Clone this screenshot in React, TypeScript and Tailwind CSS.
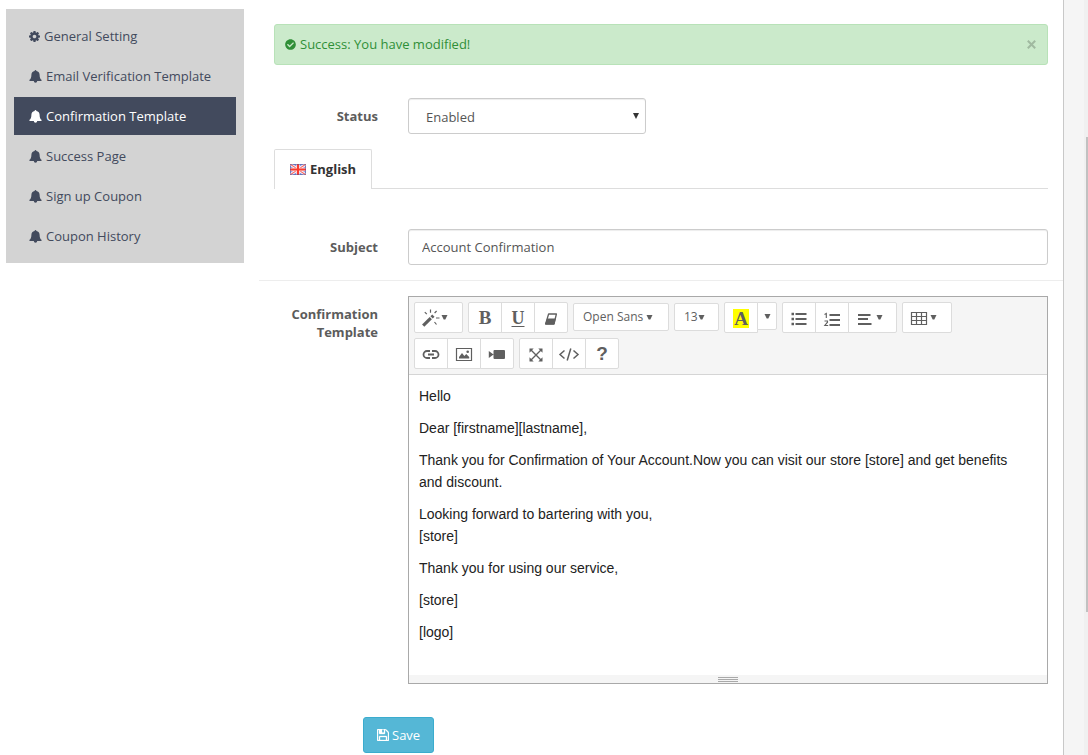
import { useState } from "react";
import type { ReactNode } from "react";
import { FaCheckCircle } from "react-icons/fa";

const menu = [
  "General Setting",
  "Email Verification Template",
  "Confirmation Template",
  "Success Page",
  "Sign up Coupon",
  "Coupon History",
];

function Caret() {
  return (
    <svg className="h-[5px] w-[7px] shrink-0" viewBox="0 0 7 5" fill="currentColor" aria-hidden="true">
      <path d="M0.5 0H6.5L4.3 4.6H2.7Z" />
    </svg>
  );
}

function Cog() {
  return (
    <svg className="h-[11px] w-[11px] shrink-0" viewBox="0 128 1536 1536" fill="currentColor" aria-hidden="true">
      <path d="M1024 896q0-106-75-181t-181-75-181 75-75 181 75 181 181 75 181-75 75-181zm512-109v222q0 12-8 23t-20 13l-185 28q-19 54-39 91 35 50 107 138 10 12 10 25t-9 23q-27 37-99 108t-94 71q-12 0-26-9l-138-108q-44 23-91 38-16 136-29 186-7 28-36 28h-222q-14 0-24.5-8.500t-11.500-21.500l-28-184q-49-16-90-37l-141 107q-10 9-25 9-14 0-25-11-126-114-165-168-7-10-7-23 0-12 8-23 15-21 51-66.500t54-70.500q-27-50-41-99l-183-27q-13-2-21-12.500t-8-23.500v-222q0-12 8-23t19-13l186-28q14-46 39-92-40-57-107-138-10-12-10-24 0-10 9-23 26-36 98.500-107.500t94.500-71.500q13 0 26 10l138 107q44-23 91-38 16-136 29-186 7-28 36-28h222q14 0 24.500 8.500t11.500 21.500l28 184q49 16 90 37l142-107q9-9 24-9 13 0 25 10 129 119 165 170 7 8 7 22 0 12-8 23-15 21-51 66.500t-54 70.500q26 50 41 98l183 28q13 2 21 12.500t8 23.500z" />
    </svg>
  );
}

function Bell() {
  return (
    <svg className="h-[13px] w-[13px] shrink-0" viewBox="0 0 13 13" fill="currentColor" aria-hidden="true">
      <path d="M6.500 0a.9.9 0 0 1 .9.900c2.100.4 3.200 1.900 3.200 3.800 0 2.700.6 4.200 2.100 5.400 0 .6-.4 1-1 1H1.300c-.6 0-1-.4-1-1 1.500-1.200 2.100-2.700 2.100-5.400 0-1.900 1.100-3.400 3.200-3.800A.9.9 0 0 1 6.500 0zM4.800 11.100h3.400a1.700 1.700 0 0 1-3.400 0z" />
    </svg>
  );
}

function Glyph({ children, wide = false }: { children: ReactNode; wide?: boolean }) {
  return (
    <svg
      className={wide ? "h-[18px] w-[22px] shrink-0" : "h-[18px] w-[18px] shrink-0"}
      viewBox={wide ? "0 0 22 18" : "0 0 18 18"}
      fill="none"
      stroke="currentColor"
      aria-hidden="true"
    >
      {children}
    </svg>
  );
}

function Tool({ label, className = "h-[31px] w-[34px] justify-center", children }: { label: string; className?: string; children: ReactNode }) {
  return (
    <button
      type="button"
      aria-label={label}
      title={label}
      className={`-ml-px flex items-center border border-[#dcdcdc] bg-white whitespace-nowrap text-[#5f5f5f] first:ml-0 first:rounded-l-xs last:rounded-r-xs ${className}`}
    >
      {children}
    </button>
  );
}

function Group({ children }: { children: ReactNode }) {
  return <div className="flex h-[31px] items-start">{children}</div>;
}

function Toolbar() {
  return (
    <div className="flex flex-wrap gap-[5px] border-b border-[#d5d5d5] bg-[#f5f5f5] p-[5px]">
      <Group>
        <Tool label="Style" className="h-[31px] w-[49px] gap-px pl-[7px]">
          <Glyph>
            <path d="M1.2 16.6L8.8 9.2" strokeWidth="3.2" />
            <path d="M9.600 8.4L11.4 6.600" strokeWidth="3.2" />
            <path d="M2.800 3.200l2 2M8.500 0.500v3.200M14.600 2l-2 2M14 9h3.500M12.500 13l2 2.500" strokeWidth="1.200" />
          </Glyph>
          <Caret />
        </Tool>
      </Group>
      <Group>
        <Tool label="Bold">
          <span className="pt-px font-['Liberation_Serif',serif] text-[19px] leading-5 font-bold">B</span>
        </Tool>
        <Tool label="Underline">
          <span className="pt-px font-['Liberation_Serif',serif] text-[18px] leading-5 font-bold underline decoration-1 underline-offset-2">U</span>
        </Tool>
        <Tool label="Remove font style">
          <Glyph>
            <path d="M6.6 5H14.400L12 15H3.600Z" strokeWidth="1.300" strokeLinejoin="round" />
            <path d="M5.400 10H13.200L12 15H3.600Z" fill="currentColor" />
          </Glyph>
        </Tool>
      </Group>
      <Group>
        <Tool label="Font family" className="mt-px h-[28px] w-[96px] gap-[3px] pl-[9px]">
          <span className="text-[12px] leading-5">Open Sans</span>
          <Caret />
        </Tool>
      </Group>
      <Group>
        <Tool label="Font size" className="mt-px h-[28px] w-[45px] pl-[9px]">
          <span className="text-[12px] leading-5">13</span>
          <Caret />
        </Tool>
      </Group>
      <Group>
        <Tool label="Recent color">
          <span className="mt-px bg-[#ffff00] px-px font-['Liberation_Serif',serif] text-[19px] leading-[19px] font-bold">A</span>
        </Tool>
        <Tool label="More colors" className="h-[28px] w-[20px] justify-center">
          <Caret />
        </Tool>
      </Group>
      <Group>
        <Tool label="Unordered list">
          <Glyph>
            <path d="M1.500 5h2.500M1.500 10h2.500M1.500 15h2.500" strokeWidth="2.400" />
            <path d="M5.500 5h11M5.500 10h11M5.500 15h11" strokeWidth="2" />
          </Glyph>
        </Tool>
        <Tool label="Ordered list">
          <Glyph>
            <path d="M6.500 6h10.500M6.500 11h10.500M6.500 16h10.500" strokeWidth="2" />
            <path d="M1.500 5.400L3.300 4.500V9M1.500 12h3v1.200L1.800 16.500h3.400" strokeWidth="1.100" />
          </Glyph>
        </Tool>
        <Tool label="Paragraph" className="h-[31px] w-[49px] gap-[2px] pl-[7px]">
          <Glyph>
            <path d="M2 6h12.500M2 10h10M2 15h13.500" strokeWidth="2" />
          </Glyph>
          <Caret />
        </Tool>
      </Group>
      <Group>
        <Tool label="Table" className="h-[31px] w-[50px] gap-[2px] pl-[7px]">
          <Glyph>
            <path d="M1.500 3.500h15v12h-15zM1.500 7.500h15M1.500 11.500h15M6.500 3.500v12M11.500 3.500v12" strokeWidth="1.200" />
          </Glyph>
          <Caret />
        </Tool>
      </Group>
      <Group>
        <Tool label="Link">
          <Glyph>
            <path d="M8 6H5a3.500 3.500 0 000 7h3M10 6h3a3.500 3.500 0 010 7h-3M6 9.500h6" strokeWidth="1.800" />
          </Glyph>
        </Tool>
        <Tool label="Picture">
          <Glyph>
            <path d="M1.500 3.500h15v12h-15z" strokeWidth="1.200" />
            <path d="M4 13.500V12l3-4 2.400 3 1.800-2 3 3v1.500z" fill="currentColor" stroke="none" />
            <circle cx="12.700" cy="6.800" r="1.300" fill="currentColor" stroke="none" />
          </Glyph>
        </Tool>
        <Tool label="Video">
          <Glyph>
            <path d="M0.800 6v7l4.700-3.500zM6.500 5h9.500a1 1 0 011 1v7a1 1 0 01-1 1H6.500a1 1 0 01-1-1V6a1 1 0 011-1z" fill="currentColor" stroke="none" />
          </Glyph>
        </Tool>
      </Group>
      <Group>
        <Tool label="Full screen">
          <Glyph>
            <path d="M4 5l10 10M14 5L4 15" strokeWidth="1.400" />
            <path d="M2.500 3.500h4.200l-4.200 4.200zM15.500 3.500v4.200l-4.200-4.200zM2.500 16.500v-4.200l4.200 4.200zM15.500 16.500h-4.200l4.200-4.200z" fill="currentColor" stroke="none" />
          </Glyph>
        </Tool>
        <Tool label="Code view">
          <Glyph wide>
            <path d="M6.500 5.500L2 9.500l4.500 4M15.500 5.500l4.500 4-4.500 4M12.800 3.500L9.200 15.500" strokeWidth="1.500" />
          </Glyph>
        </Tool>
        <Tool label="Help">
          <span className="pt-px font-['Liberation_Sans',sans-serif] text-[19px] leading-5 font-bold">?</span>
        </Tool>
      </Group>
    </div>
  );
}

function Flag() {
  return (
    <svg className="mt-px h-[11px] w-4 shrink-0" viewBox="0 0 16 11" aria-hidden="true">
      <path d="M0 0h16v11H0z" fill="#8496e2" />
      <path d="M0 0l16 11M16 0L0 11" stroke="#fff" strokeWidth="2.8" />
      <path d="M0 0l16 11M16 0L0 11" stroke="#f26a6a" strokeWidth="1.2" />
      <path d="M8 0v11M0 5.500h16" stroke="#fbdcdc" strokeWidth="3.600" />
      <path d="M8 0v11M0 5.500h16" stroke="#fb3a2e" strokeWidth="2" />
      <path d="M0.500 0.500h15v10H0.500z" fill="none" stroke="#4b4f96" strokeOpacity="0.500" />
    </svg>
  );
}

function Floppy() {
  return (
    <svg className="h-3 w-3 shrink-0" viewBox="0 128 1536 1536" fill="currentColor" stroke="currentColor" strokeWidth="40" aria-hidden="true">
      <path d="M384 1536h768v-384h-768v384zM1280 1536h128v-896q0 -14 -10 -38.5t-20 -34.5l-281 -281q-10 -10 -34 -20t-39 -10v416q0 40 -28 68t-68 28h-576q-40 0 -68 -28t-28 -68v-416h-128v1280h128v-416q0 -40 28 -68t68 -28h832q40 0 68 28t28 68v416zM896 544v-320q0 -13 -9.5 -22.5t-22.5 -9.5h-192q-13 0 -22.5 9.5t-9.5 22.5v320q0 13 9.5 22.5t22.5 9.5h192q13 0 22.5 -9.5t9.5 -22.5zM1536 640v928q0 40 -28 68t-68 28h-1344q-40 0 -68 -28t-28 -68v-1344q0 -40 28 -68t68 -28h928q40 0 88 20t76 48l280 280q28 28 48 76t20 88z" />
    </svg>
  );
}

export default function App() {
  const [subject, setSubject] = useState("Account Confirmation");
  const [alertOpen, setAlertOpen] = useState(true);

  return (
    <div className="flex min-h-screen bg-[#f5f5f5] font-['Open_Sans',sans-serif] text-[13px] leading-[18px] text-[#5c5c5c]">
      <div className="flex min-w-0 flex-1 items-start border-r border-[#c8c8c8] bg-white pl-[6px]">
        <nav className="mt-[9px] w-[238px] shrink-0 bg-[#d3d3d3] p-2">
          <ul className="flex flex-col gap-[2px]">
            {menu.map((item, i) => (
              <li key={item}>
                <a
                  href="#"
                  aria-current={i === 2 ? "page" : undefined}
                  className={
                    i === 2
                      ? "flex h-[38px] items-center gap-1 bg-[#424a5d] px-[15px] text-white"
                      : "flex h-[38px] items-center gap-1 px-[15px] text-[#424a5d]"
                  }
                >
                  {i === 0 ? <Cog /> : <Bell />}
                  {item}
                </a>
              </li>
            ))}
          </ul>
        </nav>

        <main className="ml-[15px] min-w-0 flex-1 pt-6">
          {alertOpen && (
            <div role="alert" className="mx-[15px] flex h-[41px] items-center gap-1 rounded-[3px] border border-[#b8e2b8] bg-[#cbeacb] px-[10px] pb-px text-[#2f8f37]">
              <FaCheckCircle className="h-[11px] w-[11px] shrink-0" />
              <span className="flex-1">Success: You have modified!</span>
              <button type="button" aria-label="Close" onClick={() => setAlertOpen(false)} className="flex h-3 w-3 items-center justify-center text-[#a0b9a0]">
                <svg className="h-[9px] w-[9px]" viewBox="0 0 9 9" stroke="currentColor" strokeWidth="2" aria-hidden="true">
                  <path d="M0.8 0.8L8.2 8.2M8.2 0.8L0.8 8.2" />
                </svg>
              </button>
            </div>
          )}

          <div className="mx-[15px] mt-[33px] flex items-center gap-[30px]">
            <label htmlFor="status" className="w-[104px] text-right font-bold">Status</label>
            <div className="relative w-[238px]">
              <select
                id="status"
                defaultValue="Enabled"
                className="h-9 w-full appearance-none rounded-[3px] border border-[#cccccc] bg-white pt-px pl-[17px] text-[#555555] shadow-[inset_0_1px_1px_rgba(0,0,0,0.075)]"
              >
                <option>Enabled</option>
                <option>Disabled</option>
              </select>
              <svg className="pointer-events-none absolute top-[15px] right-[7px] h-[6px] w-[6px] text-[#333333]" viewBox="0 0 6 6" fill="currentColor" aria-hidden="true">
                <path d="M0 0h6L3 6z" />
              </svg>
            </div>
          </div>

          <div role="tablist" className="mx-[15px] mt-[15px] flex h-10 border-b border-[#dddddd]">
            <button
              type="button"
              role="tab"
              aria-selected="true"
              className="-mb-px flex items-center gap-1 rounded-t-xs border border-b-0 border-[#dddddd] bg-white px-[15px] pb-[2px] font-bold text-[#333333]"
            >
              <Flag />
              English
            </button>
          </div>

          <div className="mt-10 flex items-center gap-[30px] border-b border-[#ededed] px-[15px] pb-[15px]">
            <label htmlFor="subject" className="w-[104px] text-right font-bold">Subject</label>
            <input
              id="subject"
              value={subject}
              onChange={(e) => setSubject(e.target.value)}
              className="h-9 min-w-0 flex-1 rounded-[3px] border border-[#cccccc] bg-white px-[13px] text-[#555555] shadow-[inset_0_1px_1px_rgba(0,0,0,0.075)]"
            />
          </div>

          <div className="mt-[15px] flex items-start gap-[30px] px-[15px]">
            <span id="template-label" className="w-[104px] pt-[9px] text-right font-bold">Confirmation Template</span>
            <div className="min-w-0 flex-1 border border-[#a9a9a9]">
              <Toolbar />
              <div
                role="textbox"
                aria-multiline="true"
                aria-labelledby="template-label"
                contentEditable
                suppressContentEditableWarning
                className="flex min-h-[300px] flex-col gap-[10px] bg-white py-[10px] pr-[27px] pl-[10px] font-['Liberation_Sans',sans-serif] text-[14px] leading-[22px] text-[#222222]"
              >
                <p>Hello</p>
                <p>Dear [firstname][lastname],</p>
                <p>Thank you for Confirmation of Your Account.Now you can visit our store [store] and get benefits and discount.</p>
                <p>
                  Looking forward to bartering with you,
                  <br />
                  [store]
                </p>
                <p>Thank you for using our service,</p>
                <p>[store]</p>
                <p>[logo]</p>
              </div>
              <div className="flex h-2 flex-col items-center gap-px bg-[#f5f5f5] pt-[2px]">
                <span className="h-px w-5 bg-[#a9a9a9]" />
                <span className="h-px w-5 bg-[#a9a9a9]" />
                <span className="h-px w-5 bg-[#a9a9a9]" />
              </div>
            </div>
          </div>

          <button
            type="button"
            className="mt-[33px] ml-[104px] flex h-9 items-center gap-[3px] rounded-[3px] border border-[#3bacce] bg-[#55b7d6] px-[13px] text-white"
          >
            <Floppy />
            Save
          </button>
        </main>
      </div>
      <div className="w-5 shrink-0" />
      <div className="flex w-1 shrink-0 justify-end bg-[#f0f0f0]">
        <div className="mt-[137px] h-[475px] w-[2px] bg-[#c1c1c1]" />
      </div>
    </div>
  );
}
